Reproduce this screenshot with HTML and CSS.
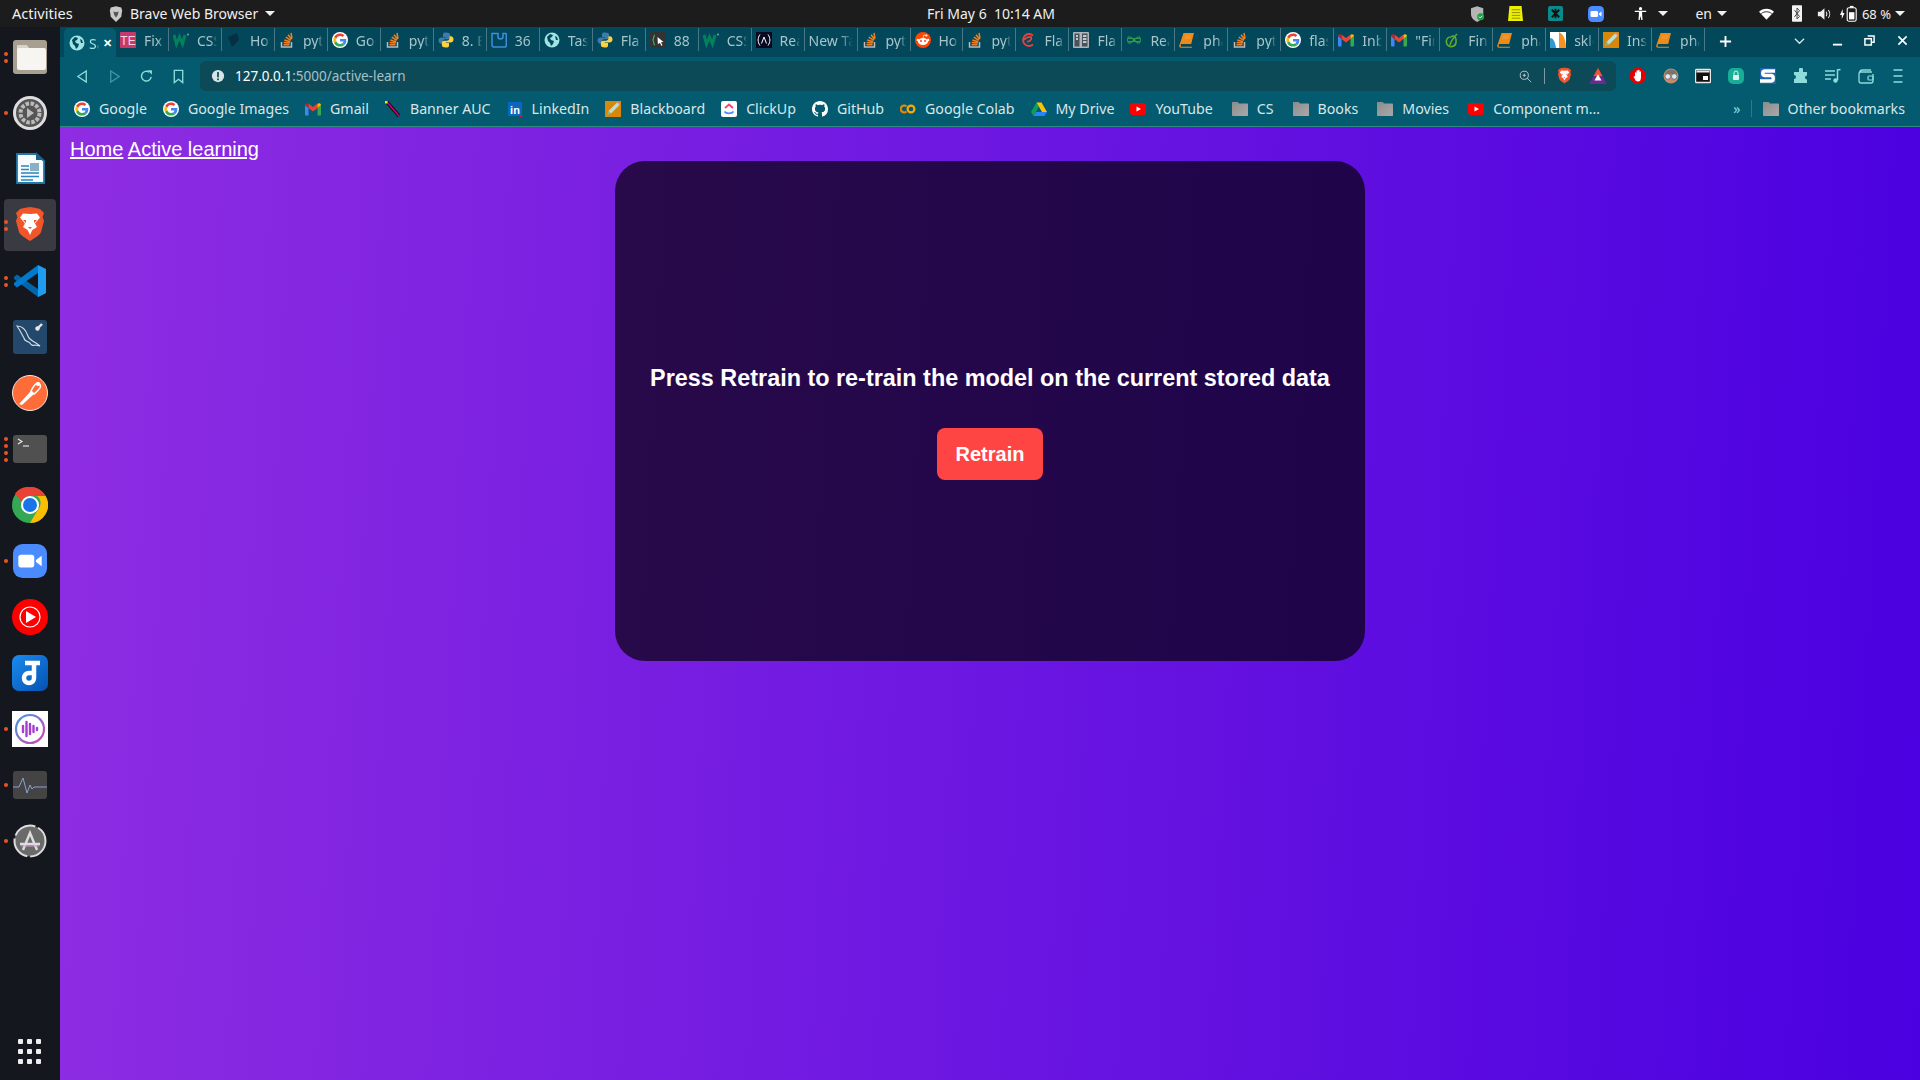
FILE: index.html
```html
<!DOCTYPE html>
<html>
<head>
    <title>Active learning</title>
    <link rel="stylesheet" href="styles.css">
</head>
<body>
    <svg class="sprites" width="0" height="0">
        <symbol id="i-g" viewBox="-5 -5 58 58">
            <circle cx="24" cy="24" r="29" fill="#fff"/>
            <path fill="#EA4335" d="M24 9.5c3.54 0 6.71 1.22 9.21 3.6l6.85-6.85C35.9 2.38 30.47 0 24 0 14.62 0 6.51 5.38 2.56 13.22l7.98 6.19C12.43 13.72 17.74 9.5 24 9.5z"/>
            <path fill="#4285F4" d="M46.98 24.55c0-1.57-.15-3.09-.38-4.55H24v9.02h12.94c-.58 2.96-2.26 5.48-4.78 7.18l7.73 6c4.51-4.18 7.09-10.36 7.09-17.65z"/>
            <path fill="#FBBC05" d="M10.53 28.59c-.5-1.45-.78-2.99-.78-4.59s.27-3.14.78-4.59l-7.98-6.19C.92 16.46 0 20.12 0 24c0 3.88.92 7.54 2.56 10.78l7.97-6.19z"/>
            <path fill="#34A853" d="M24 48c6.48 0 11.93-2.13 15.89-5.81l-7.73-6c-2.15 1.45-4.92 2.3-8.16 2.3-6.26 0-11.57-4.22-13.47-9.91l-7.98 6.19C6.51 42.62 14.62 48 24 48z"/>
        </symbol>
        <symbol id="i-globe" viewBox="0 0 16 16">
            <circle cx="8" cy="8" r="7.5" fill="#9fe4e4"/>
            <path fill="#03485a" d="M3 5l3-3 3 1-1 2-2 1 1 2 3 1-1 3-2 2-1-3-2-2zM11 4l2 1 1 3-2 0z"/>
        </symbol>
        <symbol id="i-te" viewBox="0 0 16 16">
            <rect width="16" height="16" rx="1" fill="#c9386a"/>
            <text x="8" y="12.5" font-size="12" text-anchor="middle" fill="#f5d5e0" font-family="Liberation Sans">TE</text>
        </symbol>
        <symbol id="i-w3" viewBox="0 0 16 16">
            <path fill="none" stroke="#04805c" stroke-width="3" d="M1 3l2.5 9L6.500 5l3 7L12 3"/>
            <circle cx="15" cy="2.500" r="1" fill="#5fb59c"/>
        </symbol>
        <symbol id="i-dark" viewBox="0 0 16 16">
            <path fill="#052f45" d="M2 5l9-4 2 7-7 7-2-5z"/>
        </symbol>
        <symbol id="i-so" viewBox="0 0 16 16">
            <path fill="none" stroke="#bcbbbb" stroke-width="1.500" d="M2.500 10v5h10v-5"/>
            <path fill="none" stroke="#f48024" stroke-width="1.500" d="M4.500 12.800h6M4.700 10.400l6 .6M5.300 8l5.800 1.700M6.800 5.200l5 3.100M9 2.700l3.600 4.600M12 1l1 5.600"/>
        </symbol>
        <symbol id="i-py" viewBox="0 0 16 16">
            <path fill="#3b7bad" d="M8 .5C4.500.5 5 2 5 3.500V5h3.200v.6H3.500C2 5.600 .5 6.500 .5 8.500s1.300 3.200 2.700 3.200H4.500V10c0-1.500 1.200-2.700 2.700-2.700h3c1.100 0 1.900-.9 1.900-2V2.700C12 1.200 10.500.5 8 .5z"/>
            <path fill="#fdd23e" d="M8 15.500c3.500 0 3-1.500 3-3V11H7.800v-.6h4.700c1.500 0 3-.9 3-2.900s-1.300-3.200-2.700-3.200h-1.300V6c0 1.500-1.200 2.700-2.700 2.700h-3c-1.100 0-1.900.9-1.900 2v2.600c0 1.500 1.500 2.200 4.100 2.200z"/>
        </symbol>
        <symbol id="i-doc" viewBox="0 0 16 16">
            <path fill="none" stroke="#3f8fdc" stroke-width="1.500" d="M1 1.500h6v3a2.500 2.500 0 0 0 5 0v-3h2.500c.5 0 .8.300.8.800v11c0 1-.8 1.800-1.800 1.800H3c-1.100 0-2-.9-2-2z"/>
        </symbol>
        <symbol id="i-brk" viewBox="0 0 16 16">
            <rect width="16" height="16" rx="2" fill="#333"/>
            <path fill="none" stroke="#3dae6e" stroke-width="1.200" d="M5 3C3 3 4.500 7.500 2.500 8c2 .5.500 5 2.500 5"/>
            <path fill="#fff" d="M7.500 5l6 5-2.500.2 1.500 3-1.200.5-1.400-3-2 1.600z"/>
        </symbol>
        <symbol id="i-fcc" viewBox="0 0 16 16">
            <rect width="16" height="16" fill="#0a0a23"/>
            <path fill="none" stroke="#fff" stroke-width="1" d="M4 2.500C1.500 6 1.500 10 4 13.500M12 2.500c2.500 3.500 2.500 7.500 0 11M5.500 11.500L8 5l2.500 6.500"/>
        </symbol>
        <symbol id="i-reddit" viewBox="0 0 16 16">
            <circle cx="8" cy="8" r="8" fill="#ff4500"/>
            <ellipse cx="8" cy="9.500" rx="5" ry="3.500" fill="#fff"/>
            <circle cx="2.900" cy="8" r="1.200" fill="#fff"/><circle cx="13.100" cy="8" r="1.200" fill="#fff"/>
            <circle cx="11.500" cy="3.500" r="1" fill="#fff"/>
            <path fill="none" stroke="#fff" stroke-width=".7" d="M8 6l.8-3 2.700.5"/>
            <circle cx="6" cy="9" r="1" fill="#ff4500"/><circle cx="10" cy="9" r="1" fill="#ff4500"/>
        </symbol>
        <symbol id="i-flaticon" viewBox="0 0 16 16">
            <path fill="none" stroke="#e6433f" stroke-width="1.800" d="M13 3.500A6 6 0 1 0 13 12.500M4 8c2-2.500 5-3.500 7-3 1 2-1 5-4 4.500"/>
        </symbol>
        <symbol id="i-flask" viewBox="0 0 16 16">
            <rect width="16" height="16" rx="1" fill="#aeb4b8"/>
            <rect x="1.500" y="1.500" width="5" height="13" fill="#47525b"/>
            <rect x="9" y="1.500" width="5.500" height="13" fill="#47525b"/>
            <path stroke="#eee" stroke-width="1.500" d="M10 4h3.500M10 7h3.500M10 10h3.500M3 4h2M3 7h2"/>
        </symbol>
        <symbol id="i-inf" viewBox="0 0 16 16">
            <path fill="none" stroke="#2e9b4c" stroke-width="1.100" d="M1.500 6.500h13M1.500 9.500h13M3 4.800C1 5.500 1 10.500 3 11.200c2.500.6 7.500-6.800 10-6.400 2 .7 2 5.700 0 6.400-2.500.4-7.500-7-10-6.400z"/>
        </symbol>
        <symbol id="i-book" viewBox="0 0 16 16">
            <path fill="#ef8a17" d="M4.500 1H15l-2.800 11H2L1.600 14c0 .5.300.700.8.700h10.700l-.3 1H2c-1.200 0-2-.8-1.800-2z"/>
            <path stroke="#fff3" stroke-width="1" d="M6 4h6M5.500 6h6"/>
        </symbol>
        <symbol id="i-gmail" viewBox="0 0 16 16">
            <path fill="#4285f4" d="M0 4v9.500c0 .5.400 1 1 1h2.500V7z"/>
            <path fill="#34a853" d="M16 4v9.500c0 .5-.4 1-1 1h-2.500V7z"/>
            <path fill="#ea4335" d="M3.500 7V2.500L8 6l4.500-3.500V7L8 10.500z"/>
            <path fill="#c5221f" d="M0 4c0-1.500 1.800-2.300 2.800-1.500l.7.500V7z"/>
            <path fill="#fbbc04" d="M16 4c0-1.500-1.800-2.300-2.800-1.500l-.7.500V7z"/>
        </symbol>
        <symbol id="i-leaf" viewBox="0 0 16 16">
            <path fill="none" stroke="#5fa92b" stroke-width="1.600" d="M7 5C3 5 2 8 2.500 11c.5 3 3.500 4 6 3.500 3-.8 4-3.500 3.500-7C11.500 4 9 3 7 5zM6 13c1-4 3-7 7-11"/>
        </symbol>
        <symbol id="i-skl" viewBox="0 0 16 16">
            <rect width="16" height="16" fill="#fff"/>
            <path fill="#f7931e" d="M9 0c4 2 7 7 7 16H9z"/>
            <path fill="#3499cd" d="M0 6c3 0 5 3 6 10H0z"/>
        </symbol>
        <symbol id="i-pencil" viewBox="0 0 16 16">
            <rect width="16" height="16" fill="#d98609"/>
            <path fill="#b8e0d8" d="M12 1.500l2.500 2.500L6 12.500 3.500 10z"/>
            <path fill="#7cbf9f" d="M3.500 10L2 14l4-1.500z"/>
            <path fill="#e58ca6" d="M12 1.500l1-1L15.500 3l-1 1z"/>
        </symbol>
        <symbol id="i-banner" viewBox="0 0 16 16">
            <path stroke="#111" stroke-width="3.500" d="M2 1l12 14"/>
            <path stroke="#d4007a" stroke-width="1.500" d="M2 1l12 14"/>
            <rect width="2.500" height="2.500" fill="#ffe600"/>
        </symbol>
        <symbol id="i-in" viewBox="0 0 16 16">
            <rect x="1" y="1" width="14" height="14" fill="#0a66c2"/>
            <text x="8" y="12.500" font-size="11" font-weight="700" text-anchor="middle" fill="#fff" font-family="Liberation Sans">in</text>
            <circle cx="14" cy="15" r="1.300" fill="#e0112b"/>
        </symbol>
        <symbol id="i-clickup" viewBox="0 0 16 16">
            <rect width="16" height="16" rx="2" fill="#fff"/>
            <path fill="none" stroke="#ff3d71" stroke-width="1.800" d="M4 7l4-3.500L12 7"/>
            <path fill="none" stroke="#4c8dff" stroke-width="1.800" d="M3.500 10.500C5 13 11 13 12.500 10.500"/>
        </symbol>
        <symbol id="i-github" viewBox="0 0 16 16">
            <path fill="#fff" d="M8 0C3.580 0 0 3.580 0 8c0 3.540 2.290 6.530 5.470 7.590.4.070.55-.17.55-.38 0-.19-.01-.82-.01-1.490-2.010.37-2.530-.49-2.690-.94-.09-.23-.48-.94-.82-1.130-.28-.15-.68-.52-.01-.53.630-.01 1.080.58 1.230.82.720 1.210 1.870.87 2.330.66.070-.52.280-.87.510-1.070-1.780-.2-3.640-.89-3.640-3.950 0-.87.310-1.590.820-2.150-.08-.2-.360-1.020.080-2.120 0 0 .670-.21 2.200.82.640-.18 1.320-.27 2-.27s1.360.09 2 .27c1.530-1.040 2.200-.82 2.200-.82.440 1.100.160 1.920.080 2.120.510.560.820 1.270.820 2.150 0 3.070-1.870 3.750-3.650 3.950.290.250.540.730.540 1.480 0 1.070-.010 1.930-.010 2.200 0 .210.150.460.550.380A8.010 8.010 0 0 0 16 8c0-4.420-3.580-8-8-8z"/>
        </symbol>
        <symbol id="i-colab" viewBox="0 0 16 16">
            <path fill="none" stroke="#e8860c" stroke-width="2.200" d="M6.500 5.500a3.400 3.400 0 1 0 0 5"/>
            <circle cx="11" cy="8" r="3.400" fill="none" stroke="#f9ab00" stroke-width="2.200"/>
        </symbol>
        <symbol id="i-drive" viewBox="0 0 16 16">
            <path fill="#0f9d58" d="M5.500 1.500L0 11l2.500 4L8 5.500z"/>
            <path fill="#ffc107" d="M5.500 1.500h5L16 11h-5z"/>
            <path fill="#2684fc" d="M5 11h11l-2.500 4H2.500z"/>
        </symbol>
        <symbol id="i-yt" viewBox="0 0 16 16">
            <rect y="2" width="16" height="12" rx="3" fill="#f00"/>
            <path fill="#fff" d="M6.500 5.500L11 8l-4.500 2.500z"/>
        </symbol>
        <symbol id="i-folder" viewBox="0 0 16 16">
            <defs>
                <linearGradient id="folder-fill" x1="0" y1="0" x2="1" y2="1">
                    <stop offset="0" stop-color="#8e8e8e"/><stop offset="1" stop-color="#a9a9a9"/>
                </linearGradient>
            </defs>
            <path fill="#8c8c8c" d="M0 1h6l1 2H0z"/>
            <rect y="2.500" width="16" height="12.500" rx=".8" fill="url(#folder-fill)"/>
        </symbol>
        <symbol id="i-brave" viewBox="0 0 16 18">
            <path fill="#f1562b" d="M8 0l3 .5 2 .5 2 2-.7 2 .7 2-1.500 5.500c-.5 1.500-4 3.500-5.500 4.500-1.500-1-5-3-5.500-4.500L1 7l.7-2L1 3l2-2 2-.500z"/>
            <path fill="#fff" d="M8 3.500l3.500-.3 1.500 2-2.500 3 1 1.800-2.300 1.500L8 14l-1.200-2.500L4.500 10l1-1.800-2.500-3 1.500-2z"/>
            <path fill="#f1562b" d="M6 6.500h-1.500l1.500 1.500zM10 6.500h1.500L10 8zM7 10h2l-1 1z"/>
        </symbol>
    </svg>

    <header class="topbar">
        <span class="topbar-left">Activities</span>
        <span class="app-menu">
            <svg class="app-menu-icon" viewBox="0 0 16 18"><path fill="#c9c9c9" d="M8 0l6 1.500L15 5l-1 7-6 6-6-6-1-7 1-3.500z"/><path fill="#555" d="M5 6l3 1 3-1-1 4-2 3-2-3z"/></svg>
            Brave Web Browser <i class="caret"></i>
        </span>
        <span class="clock">Fri May 6&nbsp; 10:14 AM</span>
        <div class="tray">
            <svg class="tray-shield" viewBox="0 0 16 18"><path fill="#b5b5b5" d="M7 0l7 2.500V9c0 4-3 7.500-7 9-4-1.500-7-5-7-9V2.500z"/><circle cx="11" cy="12" r="4" fill="#1fa04a"/><path stroke="#fff" fill="none" d="M9 12l1.500 1.500L13 11"/></svg>
            <svg class="tray-notes" viewBox="0 0 16 16"><path fill="#eef000" d="M1.500 0h13L16 16H0z"/><path stroke="#8d8d00" d="M4 4h9M4 7h9M4 10h9M4 13h9"/></svg>
            <svg class="tray-net" viewBox="0 0 16 16"><rect width="16" height="16" rx="2" fill="#0b8a8a"/><path stroke="#111" stroke-width="2" d="M4 4l8 8M12 4l-8 8M8 3v10"/></svg>
            <svg class="tray-zoom" viewBox="0 0 16 16"><rect width="16" height="16" rx="4.500" fill="#4a8cff"/><rect x="2.500" y="5" width="7.500" height="6" rx="1.200" fill="#fff"/><path fill="#fff" d="M10.800 7.500l2.700-2v5l-2.700-2z"/></svg>
            <span class="tray-access">
                <svg viewBox="0 0 16 16"><circle cx="8" cy="2" r="2" fill="#fff"/><path fill="#fff" d="M1 4.500h14v1.500h-5v3.500l.5 6.500H9L8 11l-1 5H5.500L6 9.500V6H1z"/></svg>
                <i class="caret"></i>
            </span>
            <span class="tray-lang">en <i class="caret"></i></span>
            <svg class="tray-wifi" viewBox="0 0 16 12"><path fill="#fff" d="M8 12L0 3.500C4-.800 12-.800 16 3.500z"/><path fill="none" stroke="#1c1c1c" d="M2.500 5.500c3-2.500 8-2.500 11 0"/></svg>
            <svg class="tray-bt" viewBox="0 0 12 20"><rect width="12" height="20" rx="1" fill="#f2f2f2"/><path fill="none" stroke="#333" stroke-width="1.100" d="M3 6l6 7.500-3 3v-13l3 3L3 14"/></svg>
            <svg class="tray-sound" viewBox="0 0 16 16"><path fill="#eee" d="M1 5.500h3L8.500 1.500v13L4 10.500H1z"/><path fill="none" stroke="#eee" stroke-width="1.200" d="M10.500 5.500c1 1.500 1 3.500 0 5M13 3.500c2 2.500 2 6.500 0 9"/></svg>
            <span class="tray-battery">
                <svg viewBox="0 0 20 18"><path fill="#fff" d="M3 3.500L0 10h2v4.500L5 8H3z"/><rect x="8" y="2" width="10" height="15" rx="2" fill="none" stroke="#fff" stroke-width="1.200"/><rect x="11" y="0" width="4" height="2" fill="#fff"/><rect x="10" y="7" width="6" height="8" fill="#fff"/></svg>
                68 % <i class="caret"></i>
            </span>
        </div>
    </header>

    <div class="desktop">
        <nav class="dock">
            <div class="dock-item">
                <div class="dots"><i></i><i></i></div>
                <svg viewBox="0 0 34 34"><rect width="34" height="34" rx="3" fill="#a79f8f"/><path fill="#d8d3ca" d="M4 5h10l2 3h14v4H4z"/><rect x="4" y="8" width="29" height="22" rx="2" fill="#f7f5f2"/></svg>
            </div>
            <div class="dock-item">
                <div class="dots"><i></i></div>
                <svg viewBox="0 0 34 34"><circle cx="17" cy="17" r="15.500" fill="#555" stroke="#ddd" stroke-width="3"/><circle cx="17" cy="17" r="9.500" fill="none" stroke="#bbb" stroke-width="4" stroke-dasharray="3.500 1.500"/><path fill="#bbb" d="M14 12l7 5-7 5z"/></svg>
            </div>
            <div class="dock-item">
                <svg viewBox="0 0 34 34"><path fill="#f7fbfd" stroke="#1e78a8" stroke-width="1.800" d="M4 2h19l8 7v22H4z"/><path fill="#1e5f8a" d="M23 0l8 8h-8z"/><path stroke="#2a87bb" stroke-width="1.600" d="M8 14h8M8 17.500h8M8 21h18M8 24.500h18M8 28h12"/><rect x="17" y="11" width="9" height="8" fill="#8ab0c6"/></svg>
            </div>
            <div class="dock-item dock-item-active">
                <div class="dots"><i></i><i></i></div>
                <svg viewBox="0 0 16 18"><use href="#i-brave"/></svg>
            </div>
            <div class="dock-item">
                <div class="dots"><i></i><i></i></div>
                <svg viewBox="0 0 34 34"><path fill="#0065a9" d="M1 13l3-2.500L25 25l8 4-8 4L1 15z"/><path fill="#007acc" d="M1 21l3 2.500L25 9V1L1 19z"/><path fill="#1f9cf0" d="M25 1l8 4v24l-8 4z"/></svg>
            </div>
            <div class="dock-item">
                <svg viewBox="0 0 34 34"><rect width="34" height="34" rx="3" fill="#23486b"/><path fill="none" stroke="#d6e0e8" stroke-width="1.100" d="M4 6c5 0 9 4 11 10 1 3 4 5 8 7l4 3-5-1c-2 1-4 0-5-2-3-2-6-2-6-5-2-3-4-8-7-12z"/><path stroke="#e8e8e8" stroke-width="2.400" d="M25 8l4-4"/><circle cx="24.500" cy="8.500" r="2.200" fill="#e8e8e8"/></svg>
            </div>
            <div class="dock-item dock-item-wide">
                <svg viewBox="0 0 36 36"><circle cx="18" cy="18" r="17.500" fill="#ff6c37" stroke="#f4e6df" stroke-width="1"/><path fill="#fff" d="M7 29l12-13 3 3-12 11z"/><path fill="none" stroke="#fff" stroke-width="1.500" d="M19 16c2-4 5-8 7-8s3 3 2 5c-2 2-4 5-6 6z"/><circle cx="26" cy="9" r="2" fill="#fff"/></svg>
            </div>
            <div class="dock-item">
                <div class="dots"><i></i><i></i><i></i><i></i></div>
                <svg viewBox="0 0 34 28" class="dock-term"><rect width="34" height="28" rx="3" fill="#505050"/><path fill="none" stroke="#eee" stroke-width="1.100" d="M5 4l4 2.500L5 9"/><path stroke="#eee" stroke-width="1.100" d="M10 11h6"/></svg>
            </div>
            <div class="dock-item dock-item-wide">
                <svg viewBox="0 0 36 36"><circle cx="18" cy="18" r="18" fill="#34a853"/><path fill="#ea4335" d="M18 0a18 18 0 0 1 15.600 9H18a9 9 0 0 0-8.500 6L3 6.500A18 18 0 0 1 18 0z"/><path fill="#fbbc04" d="M33.600 9A18 18 0 0 1 18 36l8-13.500A9 9 0 0 0 25 9z"/><circle cx="18" cy="18" r="9" fill="#fff"/><circle cx="18" cy="18" r="7" fill="#1a73e8"/></svg>
            </div>
            <div class="dock-item">
                <div class="dots"><i></i></div>
                <svg viewBox="0 0 16 16"><rect width="16" height="16" rx="4.500" fill="#4a8cff"/><rect x="2.500" y="5" width="7.500" height="6" rx="1.200" fill="#fff"/><path fill="#fff" d="M10.800 7.500l2.700-2v5l-2.700-2z"/></svg>
            </div>
            <div class="dock-item dock-item-wide">
                <svg viewBox="0 0 36 36"><circle cx="18" cy="18" r="18" fill="#f00"/><circle cx="18" cy="18" r="10" fill="none" stroke="#fff" stroke-width="1.200"/><path fill="#fff" d="M14 12l10 6-10 6z"/></svg>
            </div>
            <div class="dock-item dock-item-wide">
                <svg viewBox="0 0 36 36"><defs><linearGradient id="deezer-fill" x1="0" y1="0" x2="1" y2="1"><stop offset="0" stop-color="#1b8cf0"/><stop offset="1" stop-color="#0450b0"/></linearGradient></defs><rect width="36" height="36" rx="7" fill="url(#deezer-fill)"/><path fill="none" stroke="#fff" stroke-width="4.500" d="M13 8h15M22 8v15a5 5 0 1 1-5-5h3"/></svg>
            </div>
            <div class="dock-item dock-item-wide">
                <div class="dots"><i></i></div>
                <svg viewBox="0 0 36 36"><rect width="36" height="36" fill="#fff"/><defs><linearGradient id="audio-fill" x1="0" y1="0" x2="1" y2="1"><stop offset="0" stop-color="#3f9be0"/><stop offset="1" stop-color="#d83fb0"/></linearGradient></defs><ellipse cx="18" cy="18" rx="14" ry="14" fill="none" stroke="url(#audio-fill)" stroke-width="2.200"/><path stroke="#a23fd0" stroke-width="2.400" stroke-linecap="round" d="M11 15v6M14.500 11v14M18 13v10M21.500 15v6M25 17v2"/></svg>
            </div>
            <div class="dock-item">
                <div class="dots"><i></i></div>
                <svg viewBox="0 0 34 28" class="dock-term"><rect width="34" height="28" rx="3" fill="#444"/><path fill="none" stroke="#8a9fd8" stroke-width="1" d="M0 16h6l4-9 4 15 3-8 2 4 2-2h13"/></svg>
            </div>
            <div class="dock-item">
                <div class="dots"><i></i></div>
                <svg viewBox="0 0 34 34"><circle cx="17" cy="17" r="15.500" fill="#6a6a6a" stroke="#ddd" stroke-width="2" stroke-dasharray="24 3"/><path fill="none" stroke="#ddd" stroke-width="2.400" d="M10 26l7-17 7 17M7 20h20"/><path stroke="#c9a0c9" d="M8 22h18"/></svg>
            </div>
            <div class="dock-grid">
                <i></i><i></i><i></i><i></i><i></i><i></i><i></i><i></i><i></i>
            </div>
        </nav>

        <div class="browser">
            <div class="tabstrip">
                <div class="tabs">
                    <div class="tab tab-active"><svg class="fav"><use href="#i-globe"/></svg><span class="tab-title">Sa</span><span class="tab-close">&#x2715;</span></div>
                    <div class="tab"><svg class="fav"><use href="#i-te"/></svg><span class="tab-title">Fix t</span></div>
                    <div class="tab"><svg class="fav"><use href="#i-w3"/></svg><span class="tab-title">CSS B</span></div>
                    <div class="tab"><svg class="fav"><use href="#i-dark"/></svg><span class="tab-title">How t</span></div>
                    <div class="tab"><svg class="fav"><use href="#i-so"/></svg><span class="tab-title">pyth</span></div>
                    <div class="tab"><svg class="fav"><use href="#i-g"/></svg><span class="tab-title">Goo</span></div>
                    <div class="tab"><svg class="fav"><use href="#i-so"/></svg><span class="tab-title">pyth</span></div>
                    <div class="tab"><svg class="fav"><use href="#i-py"/></svg><span class="tab-title">8. Er</span></div>
                    <div class="tab"><svg class="fav"><use href="#i-doc"/></svg><span class="tab-title">36 I</span></div>
                    <div class="tab"><svg class="fav"><use href="#i-globe"/></svg><span class="tab-title">Task</span></div>
                    <div class="tab"><svg class="fav"><use href="#i-py"/></svg><span class="tab-title">Flas</span></div>
                    <div class="tab"><svg class="fav"><use href="#i-brk"/></svg><span class="tab-title">88 I</span></div>
                    <div class="tab"><svg class="fav"><use href="#i-w3"/></svg><span class="tab-title">CSS B</span></div>
                    <div class="tab"><svg class="fav"><use href="#i-fcc"/></svg><span class="tab-title">Reac</span></div>
                    <div class="tab tab-plain"><span class="tab-title">New Tab</span></div>
                    <div class="tab"><svg class="fav"><use href="#i-so"/></svg><span class="tab-title">pyth</span></div>
                    <div class="tab"><svg class="fav"><use href="#i-reddit"/></svg><span class="tab-title">How t</span></div>
                    <div class="tab"><svg class="fav"><use href="#i-so"/></svg><span class="tab-title">pyth</span></div>
                    <div class="tab"><svg class="fav"><use href="#i-flaticon"/></svg><span class="tab-title">Flas</span></div>
                    <div class="tab"><svg class="fav"><use href="#i-flask"/></svg><span class="tab-title">Flas</span></div>
                    <div class="tab"><svg class="fav"><use href="#i-inf"/></svg><span class="tab-title">Reac</span></div>
                    <div class="tab"><svg class="fav"><use href="#i-book"/></svg><span class="tab-title">phas</span></div>
                    <div class="tab"><svg class="fav"><use href="#i-so"/></svg><span class="tab-title">pyth</span></div>
                    <div class="tab"><svg class="fav"><use href="#i-g"/></svg><span class="tab-title">flask</span></div>
                    <div class="tab"><svg class="fav"><use href="#i-gmail"/></svg><span class="tab-title">Inbo</span></div>
                    <div class="tab"><svg class="fav"><use href="#i-gmail"/></svg><span class="tab-title">"Fin</span></div>
                    <div class="tab"><svg class="fav"><use href="#i-leaf"/></svg><span class="tab-title">Fina</span></div>
                    <div class="tab"><svg class="fav"><use href="#i-book"/></svg><span class="tab-title">phas</span></div>
                    <div class="tab"><svg class="fav"><use href="#i-skl"/></svg><span class="tab-title">sklea</span></div>
                    <div class="tab"><svg class="fav"><use href="#i-pencil"/></svg><span class="tab-title">Inst</span></div>
                    <div class="tab"><svg class="fav"><use href="#i-book"/></svg><span class="tab-title">phas</span></div>
                </div>
                <svg class="new-tab" viewBox="0 0 14 14"><path stroke="#fff" stroke-width="2" d="M7 1v12M1 7h12"/></svg>
                <svg class="tab-search" viewBox="0 0 12 8"><path fill="none" stroke="#d5e5e8" stroke-width="1.500" d="M1 1.500l5 5 5-5"/></svg>
                <svg class="win-btn win-min" viewBox="0 0 12 12"><path stroke="#fff" stroke-width="2" d="M1 10.500h10"/></svg>
                <svg class="win-btn win-max" viewBox="0 0 12 12"><path fill="none" stroke="#fff" stroke-width="1.600" d="M4 1h7v7H8M1 4h7v7H1z"/></svg>
                <svg class="win-btn win-close" viewBox="0 0 12 12"><path stroke="#fff" stroke-width="1.800" d="M1.500 1.500l9 9M10.500 1.500l-9 9"/></svg>
            </div>

            <div class="toolbar">
                <svg class="tool" viewBox="0 0 16 16"><path fill="none" stroke="#8fdcdc" stroke-width="1.400" d="M12 2v12L3 8z"/></svg>
                <svg class="tool tool-off" viewBox="0 0 16 16"><path fill="none" stroke="#8fdcdc" stroke-width="1.400" d="M4 2v12l9-6z"/></svg>
                <svg class="tool" viewBox="0 0 16 16"><path fill="none" stroke="#8fdcdc" stroke-width="1.500" d="M13 8.500A5.200 5.200 0 1 1 11 3.500"/><path fill="#8fdcdc" d="M9.500 1l4.500 .5-.5 4.500z"/></svg>
                <svg class="tool" viewBox="0 0 16 16"><path fill="none" stroke="#8fdcdc" stroke-width="1.400" d="M3.500 1.500h9v13L8 11l-4.500 3.500z"/></svg>
                <div class="omnibox">
                    <svg class="omni-info" viewBox="0 0 16 16"><circle cx="8" cy="8" r="7" fill="#d8e4e6"/><rect x="7" y="3.500" width="2" height="6" fill="#0d4a58"/><rect x="7" y="10.800" width="2" height="2" fill="#0d4a58"/></svg>
                    <span class="url"><b>127.0.0.1</b>:5000/active-learn</span>
                    <svg class="omni-zoom" viewBox="0 0 16 16"><circle cx="6.500" cy="6.500" r="5" fill="none" stroke="#c5d2d5" stroke-width="1.100"/><path stroke="#c5d2d5" stroke-width="1.100" d="M10 10l5 5M4.500 6.500h4M6.500 4.500v4"/></svg>
                    <span class="omni-sep"></span>
                    <svg class="omni-brave" viewBox="0 0 16 18"><use href="#i-brave"/></svg>
                    <svg class="omni-bat" viewBox="0 0 20 18"><path fill="#6a2a8f" d="M10 0l10 18H0z"/><path fill="#f1562b" d="M10 0l5 9H5z"/><path fill="#fff" d="M10 7l4 7H6z"/></svg>
                </div>
                <div class="extensions">
                    <svg viewBox="0 0 16 16"><path fill="#e60000" d="M5 0h6l5 5v6l-5 5H5l-5-5V5z"/><path fill="#fff" d="M5 5c0-1 1.500-1 1.500 0V3c0-1 1.500-1 1.500 0v-.5c0-1 1.500-1 1.500 0V4c0-1 1.500-1 1.500 0v5c0 3-1 4.500-3 4.500-3 0-3-3-4.500-4.500 0-1 1-1 1.500-.5z"/></svg>
                    <svg viewBox="0 0 16 16"><circle cx="8" cy="8" r="7.500" fill="#c48a6a"/><path fill="#7a746a" d="M2 6c1-6 11-6 12 0z"/><circle cx="4.800" cy="8.500" r="2.800" fill="#dfe8ea" stroke="#667" stroke-width=".8"/><circle cx="11.200" cy="8.500" r="2.800" fill="#dfe8ea" stroke="#667" stroke-width=".8"/></svg>
                    <svg viewBox="0 0 16 16"><rect x=".5" y="1.500" width="15" height="13" rx="1" fill="#111" stroke="#e8e8e8" stroke-width="1.400"/><rect x="1.500" y="2.500" width="13" height="2" fill="#e8e8e8"/><rect x="8" y="8" width="5" height="4" fill="#fff"/></svg>
                    <svg viewBox="0 0 16 16"><rect width="16" height="16" rx="5" fill="#17ad96"/><rect x="5" y="7" width="6" height="5" rx=".8" fill="#d8f5ef"/><path fill="none" stroke="#d8f5ef" d="M6 7V5a2 2 0 0 1 4 0v2"/></svg>
                    <svg viewBox="0 0 16 16"><rect width="16" height="16" fill="#1f62ad"/><path fill="none" stroke="#fff" stroke-width="3.500" d="M15 3H5C2 3 2 7.500 5 7.500h6c3 0 3 5.500 0 5.500H0"/></svg>
                    <svg viewBox="0 0 16 16"><path fill="#8fdcdc" d="M6 1.500a2 2 0 0 1 4 0V4h4v3.500a2 2 0 0 0 0 4V15H1v-4a2 2 0 0 0 0-4V4h5z"/></svg>
                    <svg viewBox="0 0 16 16"><path stroke="#8fdcdc" stroke-width="1.500" d="M0 3h10M0 7h10M0 11h6"/><path fill="none" stroke="#8fdcdc" stroke-width="1.500" d="M12.500 12V2l3-.5"/><circle cx="10.500" cy="12.500" r="2.200" fill="#8fdcdc"/></svg>
                    <svg viewBox="0 0 16 16"><path fill="none" stroke="#8fdcdc" stroke-width="1.300" d="M14 4H3a2 2 0 0 0-2 2v7a2 2 0 0 0 2 2h10a2 2 0 0 0 2-2V6M1.500 4c.5-1.500 1.500-2 3-2H13"/><rect x="10" y="8" width="5" height="4" rx="1" fill="none" stroke="#8fdcdc" stroke-width="1.200"/></svg>
                    <svg viewBox="0 0 16 16"><path stroke="#8fdcdc" stroke-width="1.700" d="M3.500 2h9M3.500 8h9M3.500 14h9"/></svg>
                </div>
            </div>

            <div class="bookmarks">
                <a class="bm"><svg class="fav"><use href="#i-g"/></svg>Google</a>
                <a class="bm"><svg class="fav"><use href="#i-g"/></svg>Google Images</a>
                <a class="bm"><svg class="fav"><use href="#i-gmail"/></svg>Gmail</a>
                <a class="bm"><svg class="fav"><use href="#i-banner"/></svg>Banner AUC</a>
                <a class="bm"><svg class="fav"><use href="#i-in"/></svg>LinkedIn</a>
                <a class="bm"><svg class="fav"><use href="#i-pencil"/></svg>Blackboard</a>
                <a class="bm"><svg class="fav"><use href="#i-clickup"/></svg>ClickUp</a>
                <a class="bm"><svg class="fav"><use href="#i-github"/></svg>GitHub</a>
                <a class="bm"><svg class="fav"><use href="#i-colab"/></svg>Google Colab</a>
                <a class="bm"><svg class="fav"><use href="#i-drive"/></svg>My Drive</a>
                <a class="bm bm-wide"><svg class="fav"><use href="#i-yt"/></svg>YouTube</a>
                <a class="bm bm-wide"><svg class="fav"><use href="#i-folder"/></svg>CS</a>
                <a class="bm bm-wide"><svg class="fav"><use href="#i-folder"/></svg>Books</a>
                <a class="bm bm-wide"><svg class="fav"><use href="#i-folder"/></svg>Movies</a>
                <a class="bm"><svg class="fav"><use href="#i-yt"/></svg>Component m…</a>
                <span class="bm-more">»</span>
                <span class="bm-sep"></span>
                <a class="bm bm-other"><svg class="fav"><use href="#i-folder"/></svg>Other bookmarks</a>
            </div>

            <main class="page">
                <div class="links">
                    <a href="#">Home</a>
                    <a href="#">Active learning</a>
                </div>
                <section class="card">
                    <h2>Press Retrain to re-train the model on the current stored data</h2>
                    <button class="retrain">Retrain</button>
                </section>
            </main>
        </div>
    </div>
</body>
</html>
```

FILE: styles.css
```css
* {
    box-sizing: border-box;
}

html, body {
    height: 100%;
}

body {
    margin: 0;
    display: flex;
    flex-direction: column;
    overflow: hidden;
    font-family: "Noto Sans", sans-serif;
    background-color: #1c1c1c;
}

.sprites {
    position: absolute;
}

svg {
    display: block;
    flex: none;
}

/* gnome top bar */
.topbar {
    height: 27px;
    flex: none;
    display: flex;
    align-items: center;
    position: relative;
    padding-left: 12px;
    background-color: #1c1c1c;
    color: #f0f0f0;
    font-size: 14px;
}

.topbar-left {
    width: 97px;
    padding-bottom: 2px;
    font-size: 14.6px;
}

.app-menu {
    display: flex;
    align-items: center;
    gap: 7px;
}

.app-menu-icon {
    width: 14px;
    height: 16px;
}

.clock {
    position: absolute;
    left: 927px;
    top: 4px;
    font-size: 14px;
}

.caret {
    display: inline-block;
    width: 0;
    height: 0;
    border-left: 5px solid transparent;
    border-right: 5px solid transparent;
    border-top: 5px solid #f0f0f0;
}

.tray {
    margin-left: auto;
    display: flex;
    align-items: center;
    padding-right: 15px;
}

.tray-shield { width: 14px; height: 16px; margin-right: 23px; }
.tray-notes { width: 15px; height: 15px; margin-right: 25px; }
.tray-net { width: 15px; height: 15px; margin-right: 25px; }
.tray-zoom { width: 16px; height: 16px; margin-right: 30px; }

.tray-access {
    display: flex;
    align-items: center;
    gap: 11px;
    margin-right: 27px;
}

.tray-access svg { width: 13px; height: 15px; }

.tray-lang {
    display: flex;
    align-items: center;
    gap: 5px;
    margin-right: 32px;
}

.tray-wifi { width: 15px; height: 12px; margin-right: 18px; }
.tray-bt { width: 10px; height: 19px; margin-right: 15px; }
.tray-sound { width: 14px; height: 14px; margin-right: 9px; }

.tray-battery {
    display: flex;
    align-items: center;
    gap: 4px;
    font-size: 13px;
}

.tray-battery svg { width: 18px; height: 18px; }

.desktop {
    flex: 1;
    display: flex;
    min-height: 0;
}

/* ubuntu dock */
.dock {
    width: 60px;
    flex: none;
    display: flex;
    flex-direction: column;
    padding-top: 2px;
    background-color: #15171f;
}

.dock-item {
    height: 56px;
    flex: none;
    display: flex;
    align-items: center;
    justify-content: center;
    position: relative;
}

.dock-item svg {
    width: 34px;
    height: 34px;
}

.dock-item svg.dock-term {
    height: 28px;
}

.dock-item-wide svg {
    width: 36px;
    height: 36px;
}

.dock-item-active::before {
    content: "";
    position: absolute;
    left: 4px;
    right: 4px;
    top: 2px;
    bottom: 2px;
    border-radius: 4px;
    background-color: #3a3b42;
}

.dock-item-active svg {
    position: relative;
    width: 32px;
    height: 36px;
}

.dots {
    position: absolute;
    left: 4px;
    top: 0;
    bottom: 0;
    display: flex;
    flex-direction: column;
    justify-content: center;
    gap: 3px;
}

.dots i {
    display: block;
    width: 4px;
    height: 4px;
    border-radius: 50%;
    background-color: #e95420;
}

.dock-grid {
    margin: auto 0 16px 18px;
    display: grid;
    grid-template-columns: repeat(3, 5px);
    gap: 5px 4px;
}

.dock-grid i {
    height: 5px;
    border-radius: 1px;
    background-color: #eee;
}

/* browser chrome */
.browser {
    flex: 1;
    min-width: 0;
    display: flex;
    flex-direction: column;
}

.tabstrip {
    height: 30px;
    flex: none;
    display: flex;
    align-items: flex-end;
    padding-left: 4px;
    background-color: #03475a;
}

.tabs {
    width: 1641px;
    flex: none;
    display: flex;
}

.tab {
    flex: 1 1 0;
    min-width: 0;
    height: 23px;
    display: flex;
    align-items: center;
    gap: 8px;
    padding: 0 4px;
    border-right: 1px solid #4a7786;
    color: #a9c4ca;
    font-size: 14px;
    line-height: 16px;
}

.tab-plain {
    padding-left: 4px;
}

.tab-active {
    height: 29px;
    gap: 4px;
    border-right: none;
    border-radius: 5px 5px 0 0;
    background-color: #045a6e;
    color: #9fe4e4;
}

.tab-active .fav {
    margin-left: 1px;
}

.tab-close {
    color: #fff;
    font-size: 11px;
    font-weight: 700;
}

.fav {
    width: 16px;
    height: 16px;
}

.tab-title {
    flex: 1;
    min-width: 0;
    margin-top: 2px;
    overflow: hidden;
    white-space: nowrap;
    -webkit-mask-image: linear-gradient(to right, #000 70%, transparent);
    mask-image: linear-gradient(to right, #000 70%, transparent);
}

.new-tab {
    width: 13px;
    height: 13px;
    margin: 0 0 9px 14px;
}

.tab-search {
    width: 11px;
    height: 8px;
    margin: 0 0 12px 62px;
}

.win-btn {
    width: 11px;
    height: 11px;
    margin-bottom: 11px;
}

.win-min { margin-left: 27px; }
.win-max { margin-left: 21px; }
.win-close { margin-left: 22px; }

.toolbar {
    height: 34px;
    flex: none;
    display: flex;
    align-items: flex-start;
    padding: 4px 0 0 15px;
    background-color: #045a6e;
}

.tool {
    width: 15px;
    height: 15px;
    margin: 8px 17px 0 0;
}

.tool-off {
    opacity: 0.45;
}

.omnibox {
    width: 1416px;
    height: 30px;
    margin-left: -3px;
    flex: none;
    display: flex;
    align-items: center;
    padding: 0 9.5px 0 11px;
    border-radius: 6px;
    background-color: #0d4a58;
    color: #a8c0c6;
    font-size: 13.5px;
}

.omni-info {
    width: 14px;
    height: 14px;
    margin-right: 10px;
}

.url b {
    font-weight: 400;
    color: #fff;
}

.omni-zoom {
    width: 13px;
    height: 13px;
    margin-left: auto;
}

.omni-sep {
    width: 1px;
    height: 16px;
    margin: 0 11.5px 0 12.5px;
    background-color: #7b9aa2;
}

.omni-brave {
    width: 15px;
    height: 18px;
    margin-right: 17px;
}

.omni-bat {
    width: 18px;
    height: 16px;
}

.extensions {
    flex: 1;
    display: grid;
    grid-template-columns: repeat(9, 16px);
    justify-content: space-between;
    align-items: center;
    height: 30px;
    padding: 0 14px;
}

.extensions svg {
    width: 16px;
    height: 16px;
}

.bookmarks {
    height: 36px;
    flex: none;
    display: flex;
    align-items: center;
    padding: 0 15px 0 14px;
    border-bottom: 1px solid #2e8a80;
    background-color: #045a6e;
    color: #d9e6e9;
    font-size: 14.2px;
}

.bm {
    display: flex;
    align-items: center;
    gap: 9px;
    margin-right: 16px;
    white-space: nowrap;
}

.bm-wide {
    margin-right: 19px;
}

.bm-more {
    margin-left: auto;
    color: #8fdcdc;
}

.bm-sep {
    width: 1px;
    height: 17px;
    margin: 0 11px 0 10px;
    background-color: #33788a;
}

.bm-other {
    margin-right: 0;
}

/* the page itself */
.page {
    flex: 1;
    display: flex;
    flex-direction: column;
    padding: 11px 10px 0;
    background: linear-gradient(93deg, #8e2de2, #4a00e0);
    font-family: "Liberation Sans", Arial, sans-serif;
}

.links {
    font-size: 20px;
    line-height: 23px;
}

.links a {
    color: #fff;
}

.card {
    width: 750px;
    height: 500px;
    margin: 0 auto;
    display: flex;
    flex-direction: column;
    align-items: center;
    justify-content: center;
    padding-top: 2px;
    border-radius: 30px;
    background-color: rgba(0, 0, 0, 0.67);
    color: #fff;
}

.card h2 {
    margin: 20px 0;
    font-size: 23.4px;
    line-height: 28px;
}

.retrain {
    margin-top: 16px;
    padding: 0 19px;
    height: 52px;
    border: none;
    border-radius: 8px;
    background-color: #ff4444;
    color: #fff;
    font-family: inherit;
    font-size: 20px;
    font-weight: 700;
}
```
